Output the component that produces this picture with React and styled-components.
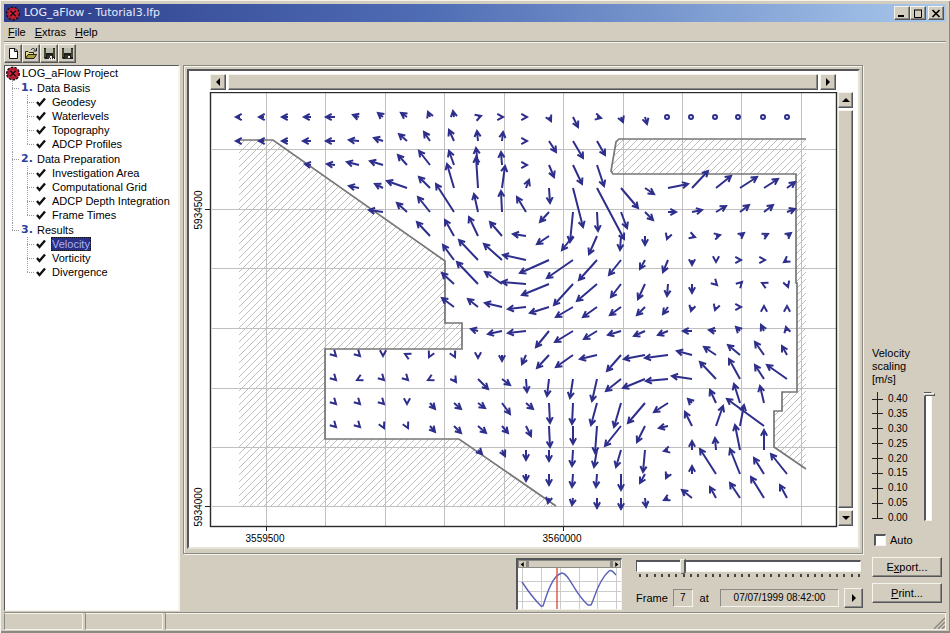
import { useState } from 'react';
import styled, { createGlobalStyle, css } from 'styled-components';

const face = '#d3cdbf';
const light = '#f6f3ea';
const shade = '#8b8983';
const dark = '#55565a';
const ink = '#2e2e8c';

const GlobalStyle = createGlobalStyle`
  * { box-sizing: border-box; }
  body {
    margin: 0;
    background: ${face};
    color: #000;
    font-family: "Liberation Sans", Arial, sans-serif;
    font-size: 11px;
    line-height: 14px;
  }
  button, input {
    font: inherit;
    color: inherit;
    margin: 0;
    padding: 0;
  }
`;

const raised = css`
  background: ${face};
  border: 1px solid;
  border-color: ${light} ${dark} ${dark} ${light};
  box-shadow: inset -1px -1px 0 ${shade};
`;
const groove = css`
  border: 1px solid ${shade};
  box-shadow: inset 1px 1px 0 ${light}, 1px 1px 0 ${light};
`;

const Window = styled.div`
  min-height: 100vh;
  display: flex;
  flex-direction: column;
  padding: 4px 4px 3px;
  box-shadow: inset 1px 1px 0 ${light}, inset -1px -2px 0 ${shade};
`;
const TitleBar = styled.header`
  height: 18px;
  display: flex;
  align-items: center;
  gap: 3px;
  padding: 0 2px 0 1px;
  background: linear-gradient(to right, #2d3d8b, #4f6db4 45%, #a9c8ec);
  color: #e6ebfb;
`;
const Title = styled.h1`
  flex: 1;
  margin: 0;
  font: normal 11px/18px "DejaVu Sans", Verdana, sans-serif;
`;
const WindowButtons = styled.div`
  display: flex;
`;
const WindowButton = styled.button`
  ${raised}
  width: 16px;
  height: 14px;
  display: flex;
  align-items: center;
  justify-content: center;
  margin-left: ${(p) => (p.$apart ? '2px' : '0')};
`;
const MenuBar = styled.nav`
  height: 20px;
  display: flex;
  align-items: center;
  gap: 9px;
  padding-left: 4px;
  border-bottom: 1px solid ${shade};
  box-shadow: 0 1px 0 ${light};
`;
const MenuItem = styled.button`
  border: none;
  background: none;
`;
const Toolbar = styled.div`
  display: flex;
  height: 23px;
  padding-top: 2px;
`;
const ToolButton = styled.button`
  ${raised}
  width: 18px;
  height: 19px;
  display: flex;
  align-items: center;
  justify-content: center;
`;
const Body = styled.main`
  flex: 1;
  display: flex;
`;
const Tree = styled.section`
  width: 176px;
  margin-right: 3px;
  background: #fff;
  border: solid;
  border-width: 1px 2px 1px 1px;
  border-color: ${dark} ${light} ${light} ${dark};
`;
const TreeRow = styled.div`
  display: flex;
  align-items: center;
  height: 14px;
  margin-top: ${(p) => (p.$section ? '1px' : '0')};
  padding-left: ${(p) => (p.$root ? '0' : '7px')};
`;
const dotsDown = 'repeating-linear-gradient(#999 0 1px, transparent 1px 2px)';
const dotsAcross = 'repeating-linear-gradient(to right, #999 0 1px, transparent 1px 2px)';
const Guide = styled.span`
  width: ${(p) => p.$width}px;
  height: 15px;
  flex: none;
  background:
    ${dotsDown} 0 0 / 1px ${(p) => ({ none: '0', half: '8px', full: '15px' })[p.$down]} no-repeat,
    ${dotsAcross} 0 7px / ${(p) => (p.$across ? '8px' : '0')} 1px no-repeat;
`;
const SectionNumber = styled.span`
  width: 15px;
  color: #2b41a0;
  font: 900 11px/14px "DejaVu Sans", Verdana, sans-serif;
`;
const TreeLabel = styled.button`
  border: 1px solid transparent;
  line-height: 12px;
  background: ${(p) => (p.$selected ? '#2b2f86' : 'none')};
  color: ${(p) => (p.$selected ? '#a9b2ee' : 'inherit')};
  ${(p) => p.$selected && 'border: 1px dotted #111;'}
  margin-left: ${(p) => (p.$leaf ? '5px' : '0')};
`;
const Center = styled.div`
  flex: 1;
  min-width: 0;
  display: flex;
  flex-direction: column;
`;
const PlotPanel = styled.section`
  ${groove}
  padding: 3px 2px 4px 3px;
`;
const PlotFrame = styled.div`
  background: #fff;
  border: 2px solid;
  border-color: ${dark} #e8e3d9 #e8e3d9 ${dark};
  padding: 3px 5px 0 0;
`;
const PlotRow = styled.div`
  display: flex;
  margin-top: 2px;
`;
const PlotSvg = styled.svg`
  display: block;
  flex: 1;
  min-width: 0;
  height: auto;
`;
const ScrollBar = styled.div`
  display: flex;
  flex: none;
  flex-direction: ${(p) => (p.$vertical ? 'column' : 'row')};
  ${(p) => (p.$vertical
    ? 'width: 15px; margin-bottom: 21px;'
    : 'height: 16px; margin: 0 17px 0 21px;')}
`;
const ScrollButton = styled.button`
  ${raised}
  flex: 0 0 16px;
  display: flex;
  align-items: center;
  justify-content: center;
`;
const ScrollThumb = styled.div`
  ${raised}
  flex: 1;
  margin: ${(p) => (p.$vertical ? '2px 0' : '0 2px')};
`;
const BottomBar = styled.section`
  flex: 1;
  display: flex;
  justify-content: flex-end;
  align-items: flex-start;
  gap: 14px;
  padding-top: 4px;
`;
const GaugeBox = styled.div`
  width: 106px;
  border: 1px solid;
  border-width: 2px 1px 1px 2px;
  border-color: ${dark} ${light} ${light} ${dark};
  background: #fff;
`;
const GaugeScroll = styled.div`
  height: 8px;
  display: flex;
`;
const GaugeButton = styled.button`
  width: 9px;
  border: 1px solid ${shade};
  background: ${face};
  display: flex;
  align-items: center;
  justify-content: center;
`;
const GaugeThumb = styled.div`
  flex: 1;
  background: ${face};
  border: solid ${shade};
  border-width: 1px 2px;
`;
const GaugeSvg = styled.svg`
  display: block;
  width: 100%;
`;
const Player = styled.div`
  width: 227px;
`;
const FrameRange = styled.input`
  appearance: none;
  display: block;
  width: 225px;
  height: 15px;
  background: none;
  &::-webkit-slider-runnable-track {
    height: 12px;
    background: #fff;
    border: 1px solid;
    border-width: 2px 1px 1px 1px;
    border-color: ${dark} ${light} ${light} ${dark};
  }
  &::-webkit-slider-thumb {
    appearance: none;
    width: 6px;
    height: 15px;
    margin-top: -3px;
    background: ${face};
    border: solid;
    border-width: 1px 2px 1px 1px;
    border-color: ${light} ${dark} ${dark} ${light};
    border-radius: 0 0 3px 3px;
  }
`;
const FrameTicks = styled.div`
  display: flex;
  justify-content: space-between;
  width: 221px;
  margin: 1px 0 0 3px;
`;
const FrameTick = styled.span`
  width: 2px;
  height: 3px;
  background: #444;
`;
const FrameRow = styled.div`
  display: flex;
  align-items: center;
  margin-top: 11px;
`;
const Readout = styled.output`
  width: ${(p) => p.$width}px;
  height: 18px;
  border: 1px solid;
  border-color: ${shade} ${light} ${light} ${shade};
  text-align: center;
  font-size: 10px;
  line-height: 16px;
  margin: ${(p) => (p.$wide ? '0 5px 0 11px' : '0 7px 0 5px')};
`;
const PlayButton = styled.button`
  ${raised}
  width: 19px;
  height: 20px;
  display: flex;
  align-items: center;
  justify-content: center;
`;
const Side = styled.aside`
  width: 83px;
  padding: 0 4px 8px 9px;
  display: flex;
  flex-direction: column;
  justify-content: flex-end;
`;
const ScaleTitle = styled.label`
  line-height: 13px;
  width: 50px;
`;
const ScaleArea = styled.div`
  display: flex;
  margin: 6px 0 8px;
`;
const ScaleList = styled.ul`
  list-style: none;
  margin: 0;
  padding: 0;
  width: 50px;
  height: 133px;
  display: flex;
  flex-direction: column;
  justify-content: space-between;
  background: linear-gradient(#222, #222) 5px 0 / 1px 126px no-repeat;
`;
const ScaleItem = styled.li`
  display: flex;
  align-items: center;
  gap: 5px;
  height: 14px;
  font-size: 10px;
  &::before {
    content: '';
    width: 11px;
    height: 1px;
    background: #222;
  }
`;
const ScaleRange = styled.input`
  appearance: none;
  writing-mode: vertical-lr;
  direction: rtl;
  width: 12px;
  height: 129px;
  background: none;
  &::-webkit-slider-runnable-track {
    width: 8px;
    background: #fff;
    border: 1px solid;
    border-width: 1px 1px 1px 2px;
    border-color: ${dark} ${light} ${light} ${dark};
  }
  &::-webkit-slider-thumb {
    appearance: none;
    width: 11px;
    height: 3px;
    margin-left: -2px;
    background: ${face};
    border: 1px solid;
    border-color: ${light} ${dark} ${dark} ${light};
  }
`;
const AutoLabel = styled.label`
  display: flex;
  align-items: center;
  gap: 4px;
  padding-left: 2px;
`;
const AutoBox = styled.input`
  appearance: none;
  width: 12px;
  height: 12px;
  background: #fff;
  border: 1px solid;
  border-width: 2px 1px 1px 2px;
  border-color: ${dark} ${light} ${light} ${dark};
  &:checked { background: #333; }
`;
const SideButton = styled.button`
  ${raised}
  height: 20px;
  margin-top: ${(p) => (p.$first ? '10px' : '6px')};
`;
const StatusBar = styled.footer`
  height: 18px;
  margin-top: 1px;
  display: flex;
  gap: 2px;
  border-top: 1px solid ${shade};
`;
const StatusCell = styled.div`
  flex: ${(p) => (p.$width ? `0 0 ${p.$width}px` : '1')};
  border: 1px solid;
  border-color: ${light} ${light} ${light} ${shade};
  display: flex;
  justify-content: flex-end;
  align-items: flex-end;
`;

const sections = [
  { title: 'Data Basis', items: ['Geodesy', 'Waterlevels', 'Topography', 'ADCP Profiles'] },
  { title: 'Data Preparation', items: ['Investigation Area', 'Computational Grid', 'ADCP Depth Integration', 'Frame Times'] },
  { title: 'Results', items: ['Velocity', 'Vorticity', 'Divergence'] },
];
const scaleValues = ['0.40', '0.35', '0.30', '0.25', '0.20', '0.15', '0.10', '0.05', '0.00'];

// one entry per grid row: first column, then dx dy pairs
const field = [
  [0, '-4 0,-5 0,-6 0,-7 0,-9 0,-6 -2,-5 -4,-6 -4,-2 -5,-1 -6,3 -1,1 0,1 0,2 4,5 10,4 1,2 5,2 7'],
  [0, '-4 0,-5 0,-6 0,-8 0,-9 0,-10 -1,-9 -3,-8 -7,-6 -9,-5 -11,-1 -10,1 -9,1 0,7 11,10 17,8 14'],
  [3, '-6 -1,-8 -1,-12 -3,-13 -4,-9 -10,-11 -14,-5 -14,-2 -17,-1 -13,1 0,5 12,9 19,7 21'],
  [5, '-10 -2,-8 -4,-20 -7,-11 -11,-7 -24,-2 -31,3 -22,3 -8,1 15,10 39,27 51,17 20,9 6,20 -4,16 -17,15 -12,17 -11,14 -9,8 -6'],
  [6, '-14 -2,-10 -9,-12 -15,-18 -28,-4 -18,-1 -21,-9 -15,-9 10,-3 30,1 19,6 16,8 8,8 0,10 -2,10 -6,9 -7,9 -7,8 -3'],
  [8, '-13 -14,-9 -16,-9 -19,-12 -14,-13 -2,-12 8,-11 14,-8 18,-1 14,0 9,-1 3,3 1,4 -1,4 -3,4 -2,4 -3'],
  [9, '-11 -15,-19 -20,-18 -16,-23 -5,-29 13,-26 18,-18 20,-12 15,-5 9,-5 12,0 5,0 2,1 0,1 0,-3 2'],
  [9, '-12 -11,-21 -22,-17 -12,-24 -2,-27 11,-19 21,-20 17,-10 13,-7 15,-1 12,0 9,1 1,2 -2,-2 -1,1 3'],
  [9, '-12 -9,-10 -8,-17 -4,-18 2,-19 6,-17 10,-14 10,-11 8,-8 8,-5 7,-1 4,-1 3,1 0,0 -1,0 -1'],
  [10, '-7 -2,-14 3,-18 2,-13 16,-18 11,-13 8,-13 4,-11 5,-10 4,-9 0,-7 -1,-4 -4,-3 -6,-1 -4'],
  [4, '1 1,1 1,0 1,-2 -1,-1 2,1 2,0 3,0 6,-4 9,-12 13,-17 12,-17 4,-14 16,-21 4,-23 3,-15 -4,-12 -8,-12 -10,-9 -13,-5 -9'],
  [4, '1 1,-2 1,1 1,1 1,-2 1,2 3,10 10,8 6,1 13,-2 17,-3 19,-5 22,-15 12,-22 9,-22 2,-20 -3,-16 -17,-11 -20,-9 -14,-20 -14'],
  [4, '1 1,1 1,1 1,0 1,5 6,7 6,7 5,8 11,7 6,1 20,-1 21,-6 22,-7 24,-17 20,-14 9,-4 -4,-6 -13,-6 -19,-4 -17'],
  [4, '1 1,1 1,1 2,1 2,5 6,7 7,8 7,6 7,5 10,1 21,0 18,-2 27,-16 20,-8 16,-9 2,-7 -14,7 -20,4 -21,-37 -27'],
  [10, '4 4,3 6,0 10,0 11,-1 16,-3 17,-5 17,-2 22,-4 1,0 -9,-1 -12,-5 -25,0 -20'],
  [12, '0 7,0 11,-1 13,-1 13,0 16,-5 9,-2 4,0 -8,-16 -25,-10 -25,-10 -16,-16 -20'],
  [13, '-1 5,-1 7,0 10,0 11,1 9,-4 2,-10 -8,-6 -11,-10 -15,-13 -21,-7 -13'],
];
const gridX = [266, 325, 385, 444, 504, 563, 623, 682, 741, 801];
const gridY = [149, 209, 268, 328, 388, 447, 506];
const westShore = '239,140 273,140 445,261 445,323 462,323 462,349 325,349 325,439 459,439 556,506';
const eastShore = '806,139 619,139 616,142 611,171 613,174 796,174 796,283 797,283 797,392 782,392 782,411 774,411 774,447 806,469';

function arrowPath(x, y, dx, dy) {
  const a = Math.atan2(dy, dx);
  const tx = x + dx;
  const ty = y + dy;
  const size = 6.5;
  const wing = (t) => `${(tx - size * Math.cos(t)).toFixed(1)} ${(ty - size * Math.sin(t)).toFixed(1)}`;
  return `M${x} ${y}L${tx} ${ty}M${wing(a - 0.5)}L${tx} ${ty}L${wing(a + 0.5)}`;
}

function Logo() {
  return (
    <svg width="16" height="15" viewBox="0 0 15 15" aria-hidden="true">
      <circle cx="7.5" cy="7.5" r="6.3" fill="#d5203a" stroke="#1d1015" strokeWidth="1.5" strokeDasharray="2.6 1.2" />
      <path d="M4.8 4.8L10.2 10.2M10.2 4.8L4.8 10.2" stroke="#1d1015" strokeWidth="1.6" />
      <circle cx="7.5" cy="7.5" r="4.6" fill="none" stroke="#7a1a28" strokeWidth=".6" />
    </svg>
  );
}

function Caret({ points, size = 8 }) {
  return (
    <svg width={size} height={size} viewBox="0 0 8 8" aria-hidden="true">
      <polygon points={points} fill="#000" />
    </svg>
  );
}

function Disk({ dots }) {
  return (
    <svg width="13" height="13" viewBox="0 0 13 13" aria-hidden="true">
      <path d="M1 1H12V12H2L1 11Z" fill="#1c1d18" />
      <path d="M3 1H10V6H3Z" fill="#b9bcae" />
      <path d="M2 2V10M11 2V10" stroke="#747341" />
      <path d="M4 8H9V12H4Z" fill="#33342e" />
      <path d="M7 9H9V11H7Z" fill="#eee" />
      {dots && <path d="M6 12H13" stroke="#eee" strokeWidth="2" strokeDasharray="1 1" />}
    </svg>
  );
}

function ProjectTree() {
  const [selected, setSelected] = useState('Velocity');
  return (
    <Tree aria-label="Project">
      <TreeRow $root>
        <Logo />
        <TreeLabel>LOG_aFlow Project</TreeLabel>
      </TreeRow>
      {sections.map((section, i) => (
        <div key={section.title}>
          <TreeRow $section>
            <Guide $width={9} $down={i === 2 ? 'half' : 'full'} $across />
            <SectionNumber>{i + 1}.</SectionNumber>
            <TreeLabel>{section.title}</TreeLabel>
          </TreeRow>
          {section.items.map((item, j) => (
            <TreeRow key={item}>
              <Guide $width={15} $down={i === 2 ? 'none' : 'full'} />
              <Guide $width={9} $down={j === section.items.length - 1 ? 'half' : 'full'} $across />
              <svg width="10" height="10" viewBox="0 0 10 10" aria-hidden="true">
                <path d="M1 5L3.5 8L9 1.5" fill="none" stroke="#111" strokeWidth="2.4" />
              </svg>
              <TreeLabel $leaf $selected={item === selected} onClick={() => setSelected(item)}>{item}</TreeLabel>
            </TreeRow>
          ))}
        </div>
      ))}
    </Tree>
  );
}

function VelocityPlot() {
  return (
    <PlotSvg viewBox="189 92 649 455" role="img" aria-label="Velocity field">
      <defs>
        <pattern id="hatch" width="7" height="7" patternUnits="userSpaceOnUse">
          <path d="M-1 8L8 -1M-1 1L1 -1M6 8L8 6" stroke="#bab5b1" strokeWidth="0.9" />
        </pattern>
      </defs>
      <polygon points={`${westShore} 239,506`} fill="url(#hatch)" />
      <polygon points={eastShore} fill="url(#hatch)" />
      {gridX.map((x) => <path key={x} d={`M${x}.5 93V526`} stroke="#c0c0c0" />)}
      {gridY.map((y) => <path key={y} d={`M212 ${y}.5H836`} stroke="#c0c0c0" />)}
      <g fill="none" stroke="#777" strokeWidth="1.7">
        <polyline points={westShore} />
        <polyline points={eastShore} />
      </g>
      <g fill="none" stroke={ink} strokeWidth="2">
        {field.map(([start, list], row) =>
          list.split(',').map((pair, i) => {
            const [dx, dy] = pair.split(' ').map(Number);
            const x = Math.round(240 + (start + i) * 23.8);
            const y = Math.round(117 + row * 23.8);
            return <path key={`${row}-${i}`} d={arrowPath(x, y, dx, dy)} />;
          })
        )}
        {[667, 691, 715, 738, 763, 787].map((x) => <circle key={x} cx={x} cy="117" r="2" />)}
      </g>
      <path d="M205 209.5H211M205 506.5H211M266.5 526V531M563.5 526V531" stroke="#222" />
      <rect x="210.5" y="92.5" width="626" height="434" fill="none" stroke="#2a2a2a" strokeWidth="1.4" />
      <g fontSize="10" fill="#000" textAnchor="middle">
        <text x="265" y="542">3559500</text>
        <text x="562" y="542">3560000</text>
        <text transform="translate(202 210) rotate(-90)">5934500</text>
        <text transform="translate(202 507) rotate(-90)">5934000</text>
      </g>
    </PlotSvg>
  );
}

function TideGauge() {
  return (
    <GaugeBox>
      <GaugeScroll>
        <GaugeButton aria-label="Earlier"><Caret size={5} points="6,0 6,8 1,4" /></GaugeButton>
        <GaugeThumb />
        <GaugeButton aria-label="Later"><Caret size={5} points="2,0 2,8 7,4" /></GaugeButton>
      </GaugeScroll>
      <GaugeSvg viewBox="0 0 103 41" role="img" aria-label="Water level">
        <path d="M4.5 0V41M23.5 0V41M42.5 0V41M61.5 0V41M79.5 0V41M98.5 0V41M0 13.5H103M0 23.5H103M0 33.5H103" stroke="#ccc" />
        <path d="M4 14C10 23 17 32 23 38L25 38C28 29 34 7 44 5C51 5 56 25 70 37L73 37C77 30 79 14 91 3C94 1 96 5 98 7" fill="none" stroke="#5b60b8" strokeWidth="1.4" />
        <path d="M39 0V41" stroke="#e0513f" strokeWidth="1.4" />
      </GaugeSvg>
    </GaugeBox>
  );
}

function App() {
  const [frame, setFrame] = useState(7);
  const [scaling, setScaling] = useState(0.4);
  const [auto, setAuto] = useState(false);

  return (
    <>
      <GlobalStyle />
      <Window>
        <TitleBar>
          <Logo />
          <Title>LOG_aFlow - Tutorial3.lfp</Title>
          <WindowButtons>
            <WindowButton aria-label="Minimize">
              <svg width="10" height="9"><path d="M1 7H7" stroke="#000" strokeWidth="2" /></svg>
            </WindowButton>
            <WindowButton aria-label="Maximize">
              <svg width="10" height="9"><path d="M1 1H9M1.5 1V8.5H8.5V1" fill="none" stroke="#000" /></svg>
            </WindowButton>
            <WindowButton aria-label="Close" $apart>
              <svg width="10" height="9"><path d="M1.5 1L8.5 8M8.5 1L1.5 8" stroke="#000" strokeWidth="1.7" /></svg>
            </WindowButton>
          </WindowButtons>
        </TitleBar>
        <MenuBar>
          <MenuItem><u>F</u>ile</MenuItem>
          <MenuItem><u>E</u>xtras</MenuItem>
          <MenuItem><u>H</u>elp</MenuItem>
        </MenuBar>
        <Toolbar>
          <ToolButton aria-label="New">
            <svg width="13" height="13"><path d="M2.5 1.5H8L10.5 4V11.5H2.5ZM7.5 1.5V4.5H10.5" fill="#fff" stroke="#111" /></svg>
          </ToolButton>
          <ToolButton aria-label="Open">
            <svg width="14" height="13">
              <path d="M1.5 11V4.5H4L5 5.5H9.5V7" fill="#e9e28a" stroke="#222" />
              <path d="M1.5 11.5L4 7.5H12.5L10 11.5Z" fill="#a9a03a" stroke="#222" />
              <path d="M7 3C8 1 10 1 12 3.5M12.5 1V4H9.5" fill="none" stroke="#222" />
            </svg>
          </ToolButton>
          <ToolButton aria-label="Save as"><Disk dots /></ToolButton>
          <ToolButton aria-label="Save"><Disk /></ToolButton>
        </Toolbar>
        <Body>
          <ProjectTree />
          <Center>
            <PlotPanel>
              <PlotFrame>
                <ScrollBar>
                  <ScrollButton aria-label="Scroll left"><Caret points="6,0 6,8 2,4" /></ScrollButton>
                  <ScrollThumb />
                  <ScrollButton aria-label="Scroll right"><Caret points="2,0 2,8 6,4" /></ScrollButton>
                </ScrollBar>
                <PlotRow>
                  <VelocityPlot />
                  <ScrollBar $vertical>
                    <ScrollButton aria-label="Scroll up"><Caret points="0,6 8,6 4,2" /></ScrollButton>
                    <ScrollThumb $vertical />
                    <ScrollButton aria-label="Scroll down"><Caret points="0,2 8,2 4,6" /></ScrollButton>
                  </ScrollBar>
                </PlotRow>
              </PlotFrame>
            </PlotPanel>
            <BottomBar>
              <TideGauge />
              <Player>
                <FrameRange
                  type="range"
                  min="1"
                  max="31"
                  aria-label="Frame"
                  value={frame}
                  onChange={(event) => setFrame(Number(event.target.value))}
                />
                <FrameTicks>
                  {Array.from({ length: 31 }, (_, i) => <FrameTick key={i} />)}
                </FrameTicks>
                <FrameRow>
                  <span>Frame</span>
                  <Readout $width={20}>{frame}</Readout>
                  <span>at</span>
                  <Readout $width={121} $wide>07/07/1999 08:42:00</Readout>
                  <PlayButton aria-label="Play"><Caret points="2,0 2,8 6,4" /></PlayButton>
                </FrameRow>
              </Player>
            </BottomBar>
          </Center>
          <Side>
            <ScaleTitle htmlFor="scaling">Velocity scaling [m/s]</ScaleTitle>
            <ScaleArea>
              <ScaleList>
                {scaleValues.map((value) => <ScaleItem key={value}>{value}</ScaleItem>)}
              </ScaleList>
              <ScaleRange
                id="scaling"
                type="range"
                min="0"
                max="0.4"
                step="0.05"
                value={scaling}
                onChange={(event) => setScaling(Number(event.target.value))}
              />
            </ScaleArea>
            <AutoLabel>
              <AutoBox type="checkbox" checked={auto} onChange={() => setAuto(!auto)} />
              Auto
            </AutoLabel>
            <SideButton $first>E<u>x</u>port...</SideButton>
            <SideButton><u>P</u>rint...</SideButton>
          </Side>
        </Body>
        <StatusBar>
          <StatusCell $width={79} />
          <StatusCell $width={78} />
          <StatusCell>
            <svg width="12" height="12" aria-hidden="true">
              <path d="M1 12L12 1M5 12L12 5M9 12L12 9" stroke={shade} strokeWidth="1.5" />
            </svg>
          </StatusCell>
        </StatusBar>
      </Window>
    </>
  );
}

export default App;
